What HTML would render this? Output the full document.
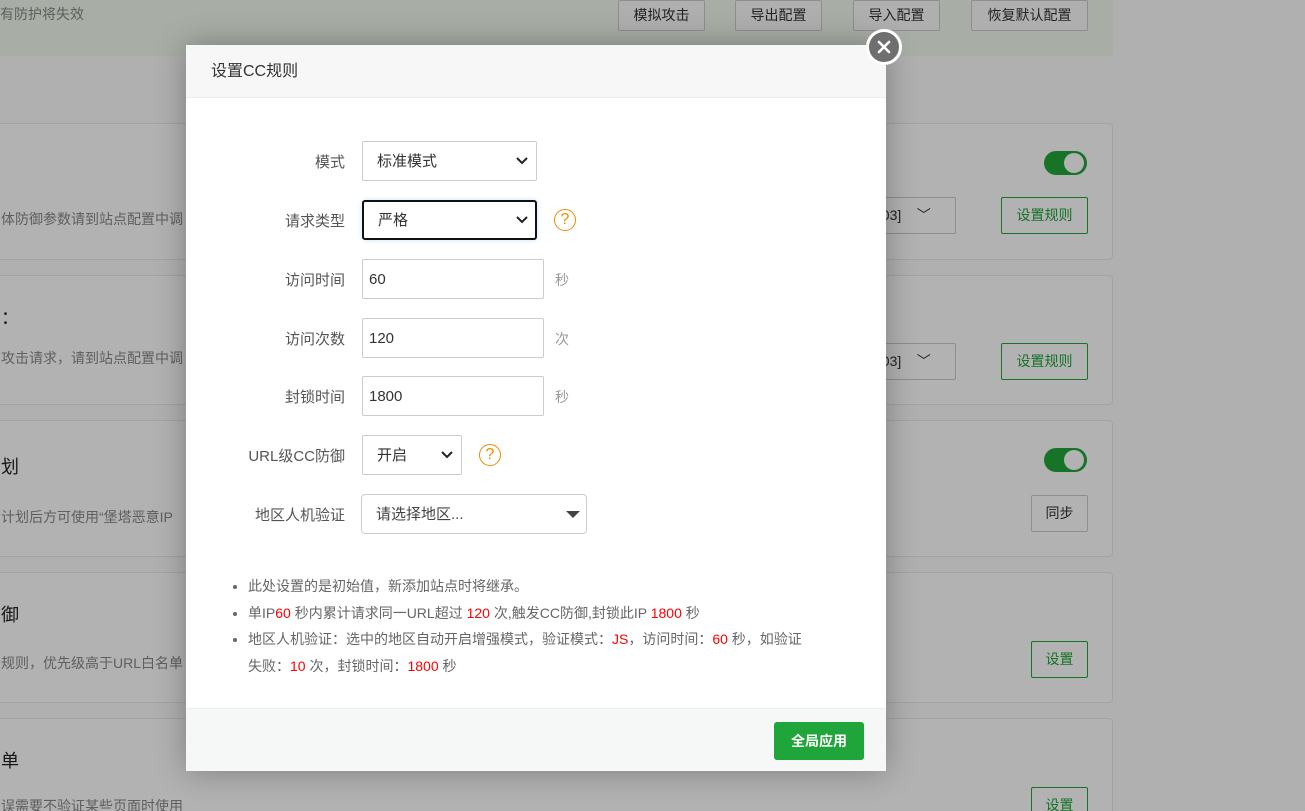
<!DOCTYPE html>
<html><head><meta charset="utf-8"><style>
*{box-sizing:border-box;margin:0;padding:0}
html,body{width:1305px;height:811px;overflow:hidden}
body{background:#fcfcfc;font-family:"Liberation Sans","Noto Sans CJK SC",sans-serif;position:relative;font-size:14px}
.banner{position:absolute;left:-10px;top:-10px;width:1123px;height:66px;background:#f1f9ee;border-radius:4px}
.btn0{position:absolute;top:0;height:31px;border:1px solid #ccc;background:#fbfbfb;border-radius:2px;font-size:14px;color:#333;text-align:center;line-height:29px}
.card{position:absolute;left:-10px;width:1123px;background:#fff;border:1px solid #eaeaea;border-radius:4px}
.t1{position:absolute;left:10px;font-size:18px;color:#222}
.t2{position:absolute;left:10px;font-size:14px;color:#888;white-space:nowrap}
.sw{position:absolute;left:1053px;width:43px;height:24px;border-radius:12px;background:#20a53a}
.sw::after{content:"";position:absolute;right:3px;top:2px;width:20px;height:20px;border-radius:50%;background:#fff}
.gb{position:absolute;height:37px;border:1px solid #20a53a;border-radius:2px;color:#20a53a;font-size:14px;text-align:center;line-height:35px;background:#fff}
.sb{position:absolute;height:37px;border:1px solid #ccc;border-radius:2px;color:#333;font-size:14px;text-align:center;line-height:35px}
.ov{position:absolute;left:0;top:0;width:1305px;height:811px;background:rgba(0,0,0,.3)}
.modal{position:absolute;left:186px;top:45px;width:700px;height:726px;background:#fff;box-shadow:0 0 30px rgba(0,0,0,.3)}
.mh{height:53px;background:#f7f7f7;border-bottom:1px solid #ececec;font-size:16px;color:#333;padding-left:25px;line-height:53px}
.close{position:absolute;left:866px;top:29px;width:36px;height:36px;border-radius:50%;background:#6f6f6f;border:3px solid #fff}
.lab{position:absolute;width:159px;text-align:right;font-size:15px;color:#555;left:0}
.inp{position:absolute;left:176px;height:40px;border:1px solid #ccc;border-radius:2px;font-size:15px;color:#333;line-height:40px;padding-left:14px}
.unit{position:absolute;left:369px;font-size:14px;color:#999}
.q{position:absolute;width:22px;height:22px;border:1.5px solid #f08a00;border-radius:50%;color:#f08a00;text-align:center;font-size:16px;line-height:19px}
.chev{position:absolute;right:8px;top:15px}
ul{position:absolute;left:46px;top:528px;width:612px;list-style:disc;color:#666;font-size:14px;line-height:26.5px}
ul li{margin-left:16px}
.r{color:#f00}
.mf{position:absolute;left:0;top:663px;width:700px;height:63px;background:#f6f8f8;border-top:1px solid #eee}
.apply{position:absolute;left:588px;top:13px;width:90px;height:38px;background:#20a53a;color:#fff;border-radius:3px;font-weight:bold;font-size:14px;text-align:center;line-height:38px}
</style></head><body>
<div class="banner"></div>
<div style="position:absolute;left:0;top:4px;font-size:14px;color:#888">有防护将失效</div>
<div class="btn0" style="left:618px;width:87px">模拟攻击</div>
<div class="btn0" style="left:735px;width:87px">导出配置</div>
<div class="btn0" style="left:853px;width:87px">导入配置</div>
<div class="btn0" style="left:971px;width:117px">恢复默认配置</div>

<div class="card" style="top:123px;height:137px">
<div class="sw" style="top:27px"></div>
<div class="t2" style="top:85px">体防御参数请到站点配置中调</div>
<div class="sb" style="left:830px;top:73px;width:135px;text-align:left;padding-left:52px">403]&nbsp;&nbsp;&nbsp;&nbsp;﹀</div>
<div class="gb" style="left:1010px;top:73px;width:87px">设置规则</div>
</div>
<div class="card" style="top:275px;height:130px">
<div class="t1" style="top:28px">：</div>
<div class="t2" style="top:72px">攻击请求，请到站点配置中调</div>
<div class="sb" style="left:830px;top:67px;width:135px;text-align:left;padding-left:52px">403]&nbsp;&nbsp;&nbsp;&nbsp;﹀</div>
<div class="gb" style="left:1010px;top:67px;width:87px">设置规则</div>
</div>
<div class="card" style="top:420px;height:137px">
<div class="sw" style="top:27px"></div>
<div class="t1" style="top:32px">划</div>
<div class="t2" style="top:86px">计划后方可使用“堡塔恶意IP</div>
<div class="sb" style="left:1040px;top:74px;width:57px">同步</div>
</div>
<div class="card" style="top:572px;height:131px">
<div class="t1" style="top:28px">御</div>
<div class="t2" style="top:80px">规则，优先级高于URL白名单</div>
<div class="gb" style="left:1040px;top:68px;width:57px">设置</div>
</div>
<div class="card" style="top:718px;height:120px">
<div class="t1" style="top:28px">单</div>
<div class="t2" style="top:77px">误需要不验证某些页面时使用</div>
<div class="gb" style="left:1040px;top:68px;width:57px">设置</div>
</div>
<div class="ov"></div>

<div class="modal">
<div class="mh">设置CC规则</div>
<div class="lab" style="top:106px">模式</div>
<div class="inp" style="top:96px;width:175px">标准模式<svg class="chev" width="12" height="8" viewBox="0 0 12 8"><path d="M1 1l5 5 5-5" stroke="#222" stroke-width="2" fill="none"/></svg></div>
<div class="lab" style="top:165px">请求类型</div>
<div class="inp" style="top:155px;width:175px;border:2px solid #111;border-radius:3px;box-shadow:0 0 6px #cfe4f7;line-height:38px">严格<svg class="chev" width="12" height="8" viewBox="0 0 12 8" style="right:7px;top:14px"><path d="M1 1l5 5 5-5" stroke="#222" stroke-width="2" fill="none"/></svg></div>
<div class="q" style="left:368px;top:164px">?</div>
<div class="lab" style="top:224px">访问时间</div>
<div class="inp" style="top:214px;width:182px;padding-left:6px">60</div>
<div class="unit" style="top:225px">秒</div>
<div class="lab" style="top:283px">访问次数</div>
<div class="inp" style="top:273px;width:182px;padding-left:6px">120</div>
<div class="unit" style="top:284px">次</div>
<div class="lab" style="top:341px">封锁时间</div>
<div class="inp" style="top:331px;width:182px;padding-left:6px">1800</div>
<div class="unit" style="top:342px">秒</div>
<div class="lab" style="top:400px">URL级CC防御</div>
<div class="inp" style="top:390px;width:100px">开启<svg class="chev" width="12" height="8" viewBox="0 0 12 8"><path d="M1 1l5 5 5-5" stroke="#222" stroke-width="2" fill="none"/></svg></div>
<div class="q" style="left:293px;top:399px">?</div>
<div class="lab" style="top:459px">地区人机验证</div>
<div class="inp" style="top:449px;left:175px;width:226px;border-radius:4px;color:#444">请选择地区...<svg style="position:absolute;right:6px;top:16px" width="14" height="8" viewBox="0 0 14 8"><path d="M0 0h14L7 7z" fill="#444"/></svg></div>
<ul>
<li>此处设置的是初始值，新添加站点时将继承。</li>
<li>单IP<span class="r">60</span> 秒内累计请求同一URL超过 <span class="r">120</span> 次,触发CC防御,封锁此IP <span class="r">1800</span> 秒</li>
<li>地区人机验证：选中的地区自动开启增强模式，验证模式：<span class="r">JS</span>，访问时间：<span class="r">60</span> 秒，如验证<br>失败：<span class="r">10</span> 次，封锁时间：<span class="r">1800</span> 秒</li>
</ul>
<div class="mf"><div class="apply">全局应用</div></div>
</div>
<div class="close"><svg width="30" height="30" viewBox="0 0 30 30" style="position:absolute;left:0;top:0"><path d="M10 10l10 10M20 10L10 20" stroke="#fff" stroke-width="2.6" stroke-linecap="round"/></svg></div>
</body></html>
